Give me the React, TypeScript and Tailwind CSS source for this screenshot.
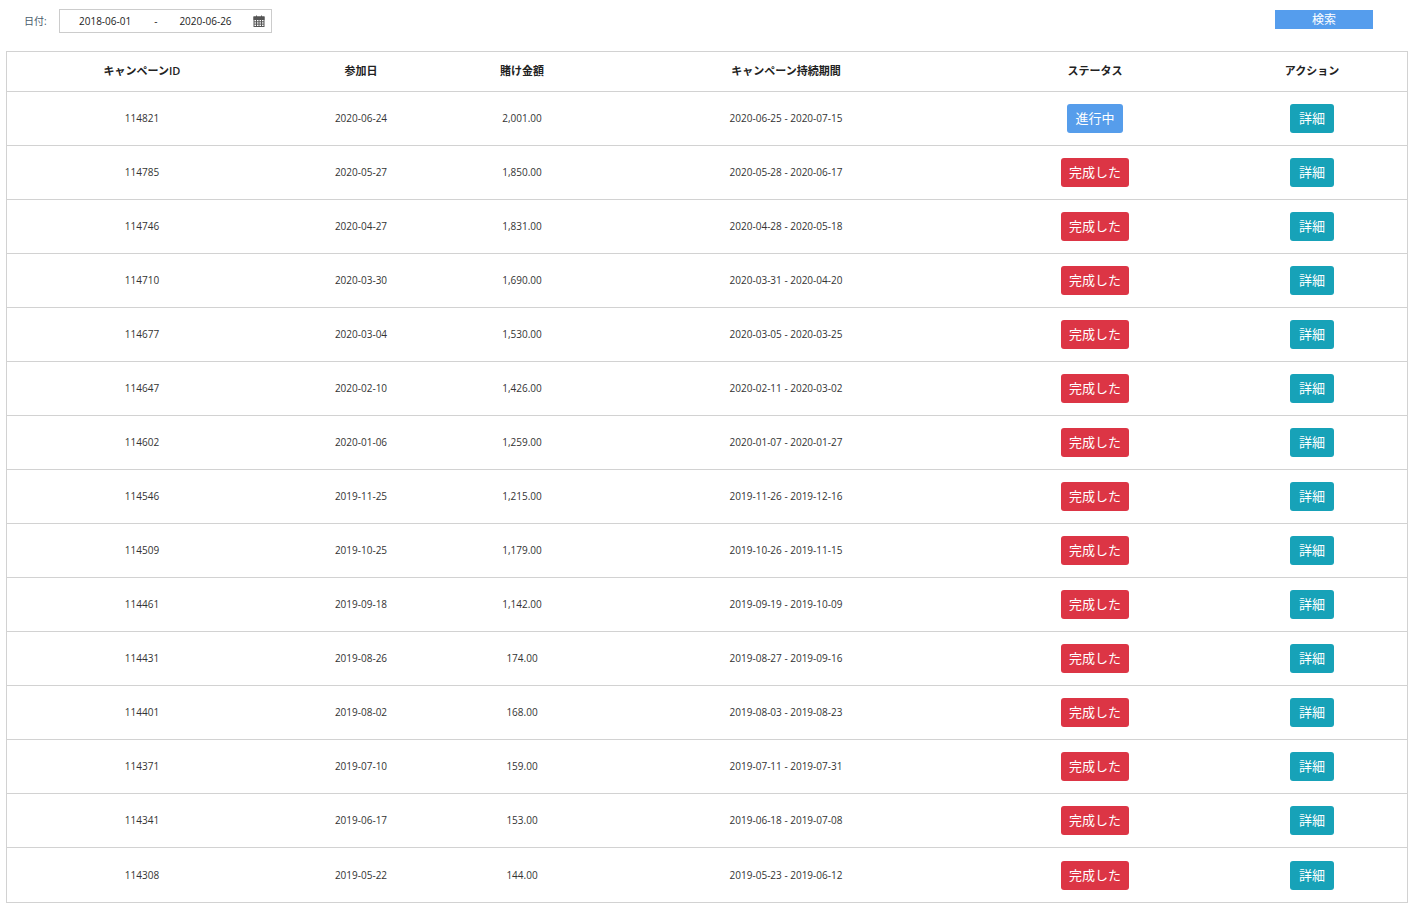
import React from "react";

const rows: [string, string, string, string, boolean][] = [
  ["114821", "2020-06-24", "2,001.00", "2020-06-25 - 2020-07-15", true],
  ["114785", "2020-05-27", "1,850.00", "2020-05-28 - 2020-06-17", false],
  ["114746", "2020-04-27", "1,831.00", "2020-04-28 - 2020-05-18", false],
  ["114710", "2020-03-30", "1,690.00", "2020-03-31 - 2020-04-20", false],
  ["114677", "2020-03-04", "1,530.00", "2020-03-05 - 2020-03-25", false],
  ["114647", "2020-02-10", "1,426.00", "2020-02-11 - 2020-03-02", false],
  ["114602", "2020-01-06", "1,259.00", "2020-01-07 - 2020-01-27", false],
  ["114546", "2019-11-25", "1,215.00", "2019-11-26 - 2019-12-16", false],
  ["114509", "2019-10-25", "1,179.00", "2019-10-26 - 2019-11-15", false],
  ["114461", "2019-09-18", "1,142.00", "2019-09-19 - 2019-10-09", false],
  ["114431", "2019-08-26", "174.00", "2019-08-27 - 2019-09-16", false],
  ["114401", "2019-08-02", "168.00", "2019-08-03 - 2019-08-23", false],
  ["114371", "2019-07-10", "159.00", "2019-07-11 - 2019-07-31", false],
  ["114341", "2019-06-17", "153.00", "2019-06-18 - 2019-07-08", false],
  ["114308", "2019-05-22", "144.00", "2019-05-23 - 2019-06-12", false],
];

const cols = ["w-[270px]", "w-[168px]", "w-[154px]", "w-[374px]", "w-[244px]", "flex-1"];
const font = { fontFamily: '"Open Sans", "Noto Sans CJK JP", sans-serif' };

function Cal() {
  return (
    <svg width="12" height="12" viewBox="0 0 12 12" fill="none" stroke="#555" strokeWidth="1">
      <rect x="1" y="2" width="10" height="9.5" fill="#fff" />
      <rect x="1" y="2" width="10" height="2.5" fill="#555" />
      <line x1="3.5" y1="0.5" x2="3.5" y2="3" />
      <line x1="8.5" y1="0.5" x2="8.5" y2="3" />
      <line x1="1" y1="6.8" x2="11" y2="6.8" />
      <line x1="1" y1="9.1" x2="11" y2="9.1" />
      <line x1="3.5" y1="4.5" x2="3.5" y2="11.5" />
      <line x1="6" y1="4.5" x2="6" y2="11.5" />
      <line x1="8.5" y1="4.5" x2="8.5" y2="11.5" />
    </svg>
  );
}

export default function App() {
  return (
    <div className="w-[1415px] min-h-[911px] bg-white text-[#333]" style={font}>
      <div className="flex items-start h-[51px]">
        <div className="flex items-center pt-[9px]">
          <span className="ml-[24px] w-[35px] text-[10px] text-[#4a5a6a]">日付:</span>
          <div className="flex items-center w-[213px] h-[24px] border border-[#ccc] text-[10px] text-[#222]">
            <span className="ml-[19px]">2018-06-01</span>
            <span className="ml-[23px]">-</span>
            <span className="ml-[22px]">2020-06-26</span>
            <span className="ml-[21px]"><Cal /></span>
          </div>
        </div>
        <button className="ml-auto mr-[42px] mt-[10px] w-[98px] h-[19px] bg-[#559ded] text-white text-[12px] leading-[19px]">検索</button>
      </div>
      <div className="mx-[6px] w-[1402px] border border-[#d2d2d2]">
        <div className="flex h-[40px] items-center border-b border-[#d2d2d2] text-[11px] font-semibold text-[#222]">
          {["キャンペーンID", "参加日", "賭け金額", "キャンペーン持続期間", "ステータス", "アクション"].map((h, i) => (
            <div key={i} className={`${cols[i]} text-center`}>{h}</div>
          ))}
        </div>
        {rows.map((r, idx) => (
          <div key={r[0]} className={`flex h-[54px] items-center text-[10px] text-[#333] ${idx < rows.length - 1 ? "border-b border-[#d2d2d2]" : ""}`}>
            <div className={`${cols[0]} text-center`}>{r[0]}</div>
            <div className={`${cols[1]} text-center`}>{r[1]}</div>
            <div className={`${cols[2]} text-center`}>{r[2]}</div>
            <div className={`${cols[3]} text-center`}>{r[3]}</div>
            <div className={`${cols[4]} flex justify-center`}>
              {r[4] ? (
                <span className="w-[56px] h-[29px] rounded-[3px] bg-[#569deb] text-white text-[13px] leading-[29px] text-center">進行中</span>
              ) : (
                <span className="w-[68px] h-[29px] rounded-[3px] bg-[#dc3545] text-white text-[13px] leading-[29px] text-center">完成した</span>
              )}
            </div>
            <div className={`${cols[5]} flex justify-center`}>
              <span className="w-[44px] h-[29px] rounded-[3px] bg-[#17a2b8] text-white text-[13px] leading-[29px] text-center">詳細</span>
            </div>
          </div>
        ))}
      </div>
    </div>
  );
}
